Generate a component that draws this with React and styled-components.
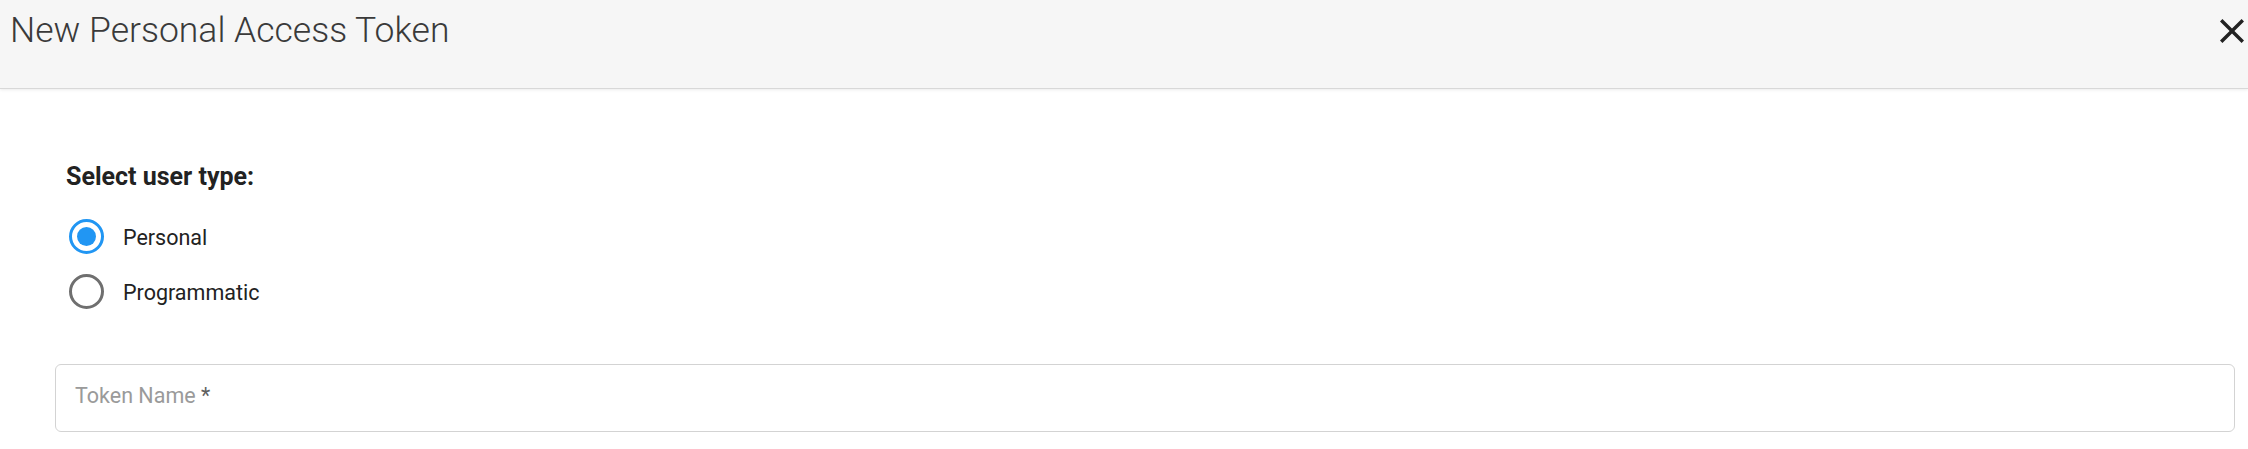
import styled, { createGlobalStyle } from "styled-components";

const GlobalStyle = createGlobalStyle`
  body {
    margin: 0;
    background: #ffffff;
    font-family: Roboto, "Liberation Sans", sans-serif;
  }
`;

const Header = styled.div`
  height: 88px;
  background: #f6f6f6;
  border-bottom: 1px solid #d8d8d8;
  box-shadow: 0 1px 3px rgba(0, 0, 0, 0.08);
  display: flex;
  align-items: flex-start;
  justify-content: space-between;
  padding: 0 4px 0 10px;
`;

const Title = styled.h2`
  margin: 13px 0 0;
  font-size: 35.5px;
  line-height: 35.5px;
  font-weight: 300;
  color: #3a3a3a;
`;

const CloseButton = styled.button`
  border: none;
  background: none;
  padding: 0;
  margin-top: 19px;
  width: 24px;
  height: 24px;
  color: #222222;
  cursor: pointer;
  display: flex;
`;

const Body = styled.div`
  padding: 0 13px 0 55px;
  display: flex;
  flex-direction: column;
`;

const GroupLabel = styled.div`
  margin: 75px 0 0 11px;
  font-size: 25px;
  line-height: 25px;
  font-weight: 700;
  color: #222222;
`;

const RadioList = styled.div`
  margin-top: 19.5px;
  display: flex;
  flex-direction: column;
`;

const RadioRow = styled.label`
  height: 55px;
  display: flex;
  align-items: center;
  gap: 19px;
  padding-left: 14px;
  cursor: pointer;
`;

const Circle = styled.span`
  box-sizing: border-box;
  width: 35px;
  height: 35px;
  border-radius: 50%;
  border: 3px solid ${(p) => (p.$checked ? "#2196f3" : "#6f6f6f")};
  display: flex;
  align-items: center;
  justify-content: center;

  &::after {
    content: "";
    width: 19px;
    height: 19px;
    border-radius: 50%;
    background: #2196f3;
    display: ${(p) => (p.$checked ? "block" : "none")};
  }
`;

const RadioText = styled.span`
  margin-top: 3px;
  font-size: 21.5px;
  line-height: 22px;
  color: #222222;
`;

const Field = styled.div`
  margin-top: 45px;
  box-sizing: border-box;
  height: 68px;
  border: 1px solid #d3d3d3;
  border-radius: 6px;
  display: flex;
  align-items: center;
  padding-left: 19px;
`;

const FieldLabel = styled.span`
  font-size: 21.5px;
  line-height: 21.5px;
  color: #9a9a9a;
  margin-bottom: 4px;
`;

const Required = styled.span`
  color: #5f5f5f;
`;

const options = [
  { label: "Personal", checked: true },
  { label: "Programmatic", checked: false },
];

const App = () => {
  return (
    <>
      <GlobalStyle />
      <Header>
        <Title>New Personal Access Token</Title>
        <CloseButton aria-label="close">
          <svg width="24" height="24" viewBox="5 5 14 14" fill="currentColor">
            <path d="M19 6.41L17.59 5 12 10.59 6.41 5 5 6.41 10.59 12 5 17.59 6.41 19 12 13.41 17.59 19 19 17.59 13.41 12z" />
          </svg>
        </CloseButton>
      </Header>
      <Body>
        <GroupLabel>Select user type:</GroupLabel>
        <RadioList>
          {options.map((o) => (
            <RadioRow key={o.label}>
              <Circle $checked={o.checked} />
              <RadioText>{o.label}</RadioText>
            </RadioRow>
          ))}
        </RadioList>
        <Field>
          <FieldLabel>
            Token Name <Required>*</Required>
          </FieldLabel>
        </Field>
      </Body>
    </>
  );
};

export default App;
